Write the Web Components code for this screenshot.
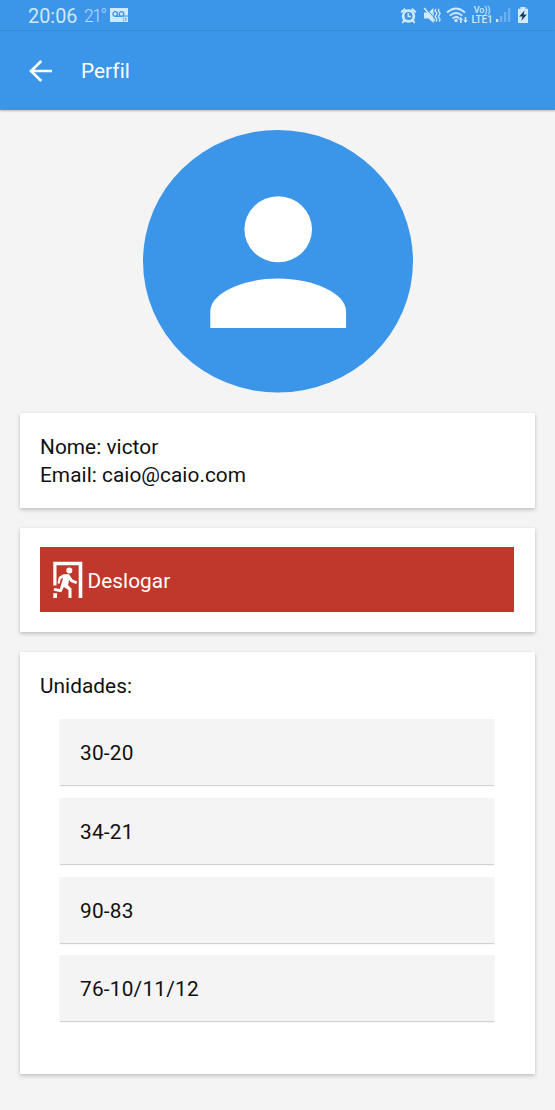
<!DOCTYPE html>
<html lang="pt-BR">
<head>
<meta charset="utf-8">
<title>Perfil</title>
<style>
html,body{margin:0;height:100%;background:#f4f4f4}
body{font-family:Roboto,"Liberation Sans",sans-serif;font-size:20.8px;letter-spacing:.05px;color:#101010;overflow:hidden}
</style>
</head>
<body>
<profile-page></profile-page>
<script>
function define(name, html) {
  const t = document.createElement('template');
  t.innerHTML = html;
  customElements.define(name, class extends HTMLElement {
    constructor() {
      super();
      this.attachShadow({mode: 'open'}).appendChild(t.content.cloneNode(true));
    }
  });
}

define('status-bar', `
<style>
:host{display:flex;height:31px;box-sizing:border-box;padding:0 26px 0 28px;background:#3b95e9;color:#cfe9ff;align-items:center;border-bottom:1px solid #368ddf}
svg{display:block;flex:none;fill:#cfe9ff}
.time{font-size:19.8px;line-height:30px;width:56px;flex:none;padding-top:2px;box-sizing:border-box;height:31px}
.temp{font-size:17.5px;font-weight:300;width:25px;flex:none;line-height:30px;white-space:nowrap;letter-spacing:-1.5px;padding-top:1px;color:#b9deff}
.right{display:flex;margin-left:auto;align-items:center}
.net{font-size:10px;line-height:9px;width:22px;margin-right:2px;text-align:center;font-weight:500;letter-spacing:-.1px}
.net span{display:block;white-space:nowrap;height:9px}
.net span:first-child{font-size:9px}
</style>
<span class="time">20:06</span><span class="temp">21°</span>
<svg width="20" height="16" viewBox="0 0 20 16"><path d="M1 1h18v7.500h-5V15H1z"/><g fill="none" stroke="#3b95e9" stroke-width="1.300"><circle cx="6.200" cy="7" r="2.300"/><circle cx="12.500" cy="7" r="2.300"/><path d="M6 9.300h6.500"/></g><path d="M14.500 9.500H19V15h-4.500z"/><path d="M16.800 10.500v3.500" stroke="#3b95e9"/></svg>
<div class="right">
<svg width="17" height="17" viewBox="0 0 17 17" style="margin-right:6px"><path d="M.5 4.600 4.600 1l1.300 1.500L1.800 6zM16.500 4.600 12.400 1l-1.300 1.500L15.200 6zM3.500 12.500l1.800 1.500-2.300 2.500-1.300-1zM13.500 12.500 11.700 14l2.300 2.500 1.300-1z"/><circle cx="8.500" cy="9" r="5.400" fill="none" stroke="#cfe9ff" stroke-width="2.700"/><path d="M8.200 6v3.500h2.800" fill="none" stroke="#cfe9ff" stroke-width="1.400"/></svg>
<svg width="18" height="17" viewBox="0 0 18 17" style="margin-right:5px"><path d="M1 5.500h4.500l5-4.500v15l-5-4.500H1z"/><path d="M2.500 .5 12 11.800" stroke="#3b95e9" stroke-width="1"/><path d="M1.200 1 11.800 14" stroke="#cfe9ff" stroke-width="1.500"/><path d="M13 2q-1.500 1.500 0 3t0 3 0 3 0 3.500M16.200 2q-1.500 1.500 0 3t0 3 0 3 0 3.500" fill="none" stroke="#cfe9ff" stroke-width="1.400"/></svg>
<svg width="24" height="18" viewBox="0 0 24 18" style="margin-right:1px"><g fill="none" stroke="#cfe9ff" stroke-width="1.800"><path d="M1 6.500Q10-1.500 19 6.500M3.800 9.600q6.200-5.200 12.400 0M6.600 12.500q3.400-2.800 6.500-.3"/></g><circle cx="10" cy="14.500" r="1.700"/><path d="M14.800 11l2.300 2.800h-1.500V17H14v-3.200h-1.500zM19.500 17l-2.300-2.800h1.500V11h1.600v3.200h1.500z"/></svg>
<div class="net"><span>Vo))</span><span>LTE1</span></div>
<svg width="17" height="16" viewBox="0 0 17 16" style="margin-right:5px"><path d="M1 12h2.300v3H1z"/><path opacity=".32" d="M5 9h2.300v6H5zM9 5h2.300v10H9zM13 1h2.300v14H13z"/></svg>
<svg width="12" height="18" viewBox="0 0 12 18"><path d="M3.500 1h5v1.800H11V17H1V2.800h2.500z"/><path fill="#173b60" d="M7.500 4.500 2.200 10.600h3.200L4.500 14.800l5.300-6.200H6.700z"/></svg>
</div>`);

define('app-bar', `
<style>
:host{display:flex;align-items:center;height:79px;box-sizing:border-box;padding:0 29px;background:#3b95e9;color:#fff;box-shadow:0 1px 2px rgba(0,0,0,.25)}
svg{display:block;margin-right:28px;flex:none}
.t{line-height:24px}
</style>
<svg width="24" height="22" viewBox="0 0 24 22" fill="none" stroke="#fff" stroke-width="2.600"><path d="M12.300 1 2 11l10.300 10M2 11h21"/></svg>
<div class="t"><slot></slot></div>`);

define('user-avatar', `
<style>
:host{display:flex;justify-content:center}
svg{display:block}
</style>
<svg width="270" height="263" viewBox="0 0 270 263"><ellipse cx="135" cy="131.300" rx="135" ry="131.300" fill="#3b95e9"/><ellipse cx="135.200" cy="99.300" rx="33.800" ry="33" fill="#fff"/><path d="M67.300 198v-16.500c0-19 34-33 67.900-33s67.900 14 67.900 33V198z" fill="#fff"/></svg>`);

define('info-card', `
<style>
:host{display:block;box-sizing:border-box;background:#fff;padding:19px 21px 20px 20px;box-shadow:0 2px 4px rgba(0,0,0,.2),0 0 2px rgba(0,0,0,.06)}
</style><slot></slot>`);

define('text-row', `<style>:host{display:block;line-height:28px;height:28px;white-space:nowrap}</style><slot></slot>`);

define('logout-button', `
<style>
:host{display:flex;align-items:center;height:65px;background:#c0382b;color:#fff;padding-left:12px;box-sizing:border-box}
svg{display:block;margin-right:4.500px;flex:none}
span{line-height:28px;padding-top:2px}
</style>
<svg width="31" height="38" viewBox="0 0 31 38" fill="#fff"><path d="M1.300 .700h29V37h-3.600V4.200H4.500v20.300H1.300zM1.300 32.300h3.700V37H1.300z"/><circle cx="17.300" cy="9.600" r="3"/><path d="M11.500 13.300h5.500l3.500 5.200 4.700 1.900-1 2.500-5.500-2-1.500-2-1.200 5 3.500 3.500V37h-3v-8l-4.600-3.100-2.700 5.400L1.600 29.800l.6-2.800 5.700.9 3.200-11-2.300 1-1.200 4.800-2.200-.5 1.500-6.200z"/></svg>
<span><slot></slot></span>`);

define('unit-list', `<style>:host{display:flex;flex-direction:column;gap:12.800px;padding:0 20.500px 0 19.500px}</style><slot></slot>`);
define('unit-item', `<style>:host{display:block;box-sizing:border-box;height:66px;line-height:67px;padding:1px 20.500px 0;background:#f4f4f4;letter-spacing:.22px;box-shadow:0 1px 1px rgba(0,0,0,.18)}</style><slot></slot>`);

define('profile-page', `
<style>
:host{display:flex;flex-direction:column;height:1110px}
main{display:flex;flex-direction:column;padding:20px 20px 0;gap:20px}
.user{height:95px;padding-top:20px}
.logout{height:104px}
.units{height:422px;padding-top:20px}
unit-list{margin-top:19px}
</style>
<status-bar></status-bar>
<app-bar>Perfil</app-bar>
<main>
<user-avatar></user-avatar>
<info-card class="user"><text-row>Nome: victor</text-row><text-row>Email: caio@caio.com</text-row></info-card>
<info-card class="logout"><logout-button>Deslogar</logout-button></info-card>
<info-card class="units"><text-row>Unidades:</text-row>
<unit-list><unit-item>30-20</unit-item><unit-item>34-21</unit-item><unit-item>90-83</unit-item><unit-item>76-10/11/12</unit-item></unit-list></info-card>
</main>`);
</script>
</body>
</html>
